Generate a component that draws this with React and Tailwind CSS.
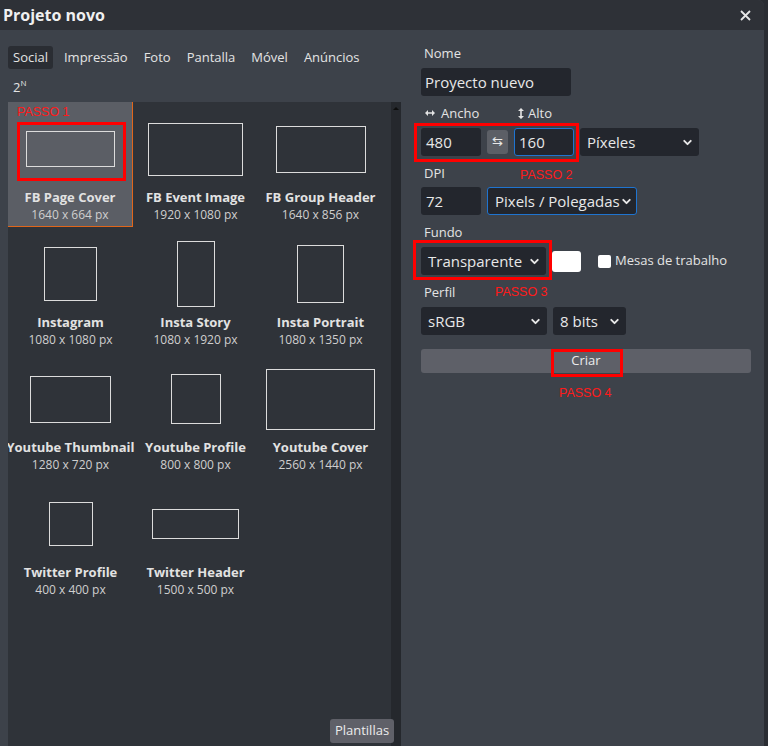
import { ChevronDown } from 'lucide-react';

const tabs = ['Social', 'Impressão', 'Foto', 'Pantalla', 'Móvel', 'Anúncios'];

const presets = [
  { name: 'FB Page Cover', dims: '1640 x 664 px', w: 89, h: 36, selected: true },
  { name: 'FB Event Image', dims: '1920 x 1080 px', w: 95, h: 53 },
  { name: 'FB Group Header', dims: '1640 x 856 px', w: 90, h: 47 },
  { name: 'Instagram', dims: '1080 x 1080 px', w: 53, h: 54 },
  { name: 'Insta Story', dims: '1080 x 1920 px', w: 38, h: 66 },
  { name: 'Insta Portrait', dims: '1080 x 1350 px', w: 47, h: 58 },
  { name: 'Youtube Thumbnail', dims: '1280 x 720 px', w: 81, h: 47 },
  { name: 'Youtube Profile', dims: '800 x 800 px', w: 50, h: 50 },
  { name: 'Youtube Cover', dims: '2560 x 1440 px', w: 109, h: 61 },
  { name: 'Twitter Profile', dims: '400 x 400 px', w: 44, h: 44 },
  { name: 'Twitter Header', dims: '1500 x 500 px', w: 87, h: 30 },
];

function Label({ children }) {
  return <div className="ml-[3px] h-[18px] leading-[18px] text-[13px] text-[#e4e4e4]">{children}</div>;
}

function Select({ value, className = '' }) {
  return (
    <div className={`h-[28px] flex items-center justify-between rounded-[3px] bg-[#23262d] pl-[7px] pr-[5px] text-[15px] text-[#e8e8e8] ${className}`}>
      <span className="whitespace-nowrap">{value}</span>
      <ChevronDown size={13} strokeWidth={3.5} className="text-[#e8e8e8] shrink-0" />
    </div>
  );
}

function Annotation({ className }) {
  return <div className={`absolute border-[3px] border-[#ff0000] pointer-events-none ${className}`} />;
}

function Step({ children, className }) {
  return (
    <div className={`absolute text-[12.5px] leading-[12px] text-[#ff1a1a] font-['Liberation_Sans',sans-serif] ${className}`}>
      {children}
    </div>
  );
}

export default function App() {
  return (
    <div className="relative w-[768px] h-[746px] overflow-hidden bg-[#2a2d33] font-['Open_Sans',sans-serif]">
      <div className="w-[764px] h-full flex flex-col bg-[#3d424a] rounded-tr-[6px] overflow-hidden">
        {/* header */}
        <div className="h-[30px] shrink-0 flex items-center justify-between bg-[#2e3137] pl-[3px] pr-[13px]">
          <span className="text-[16px] font-bold text-[#f0f0f0]">Projeto novo</span>
          <svg width="11" height="11" viewBox="0 0 11 11" className="text-[#e6e6e6]">
            <path d="M1 1 L10 10 M10 1 L1 10" stroke="currentColor" strokeWidth="1.8" />
          </svg>
        </div>

        <div className="flex flex-1 min-h-0">
          {/* left: presets */}
          <div className="w-[401px] shrink-0 flex flex-col pl-[8px] pt-[16px]">
            <div className="flex gap-[6px]">
              {tabs.map((t, i) => (
                <div
                  key={t}
                  className={`h-[23px] leading-[23px] px-[5px] rounded-[3px] text-[13px] text-[#e4e4e4] ${i === 0 ? 'bg-[#2a2d33]' : ''}`}
                >
                  {t}
                </div>
              ))}
            </div>
            <div className="mt-[7px] h-[23px] leading-[23px] px-[5px] text-[13px] text-[#e4e4e4]">
              2<span className="text-[8px] align-top leading-[14px]">N</span>
            </div>

            <div className="mt-[3px] flex flex-1 min-h-0">
              <div className="w-[383px] bg-[#2f3339] overflow-hidden">
                <div className="grid grid-cols-[125px_125px_125px] auto-rows-[125px]">
                  {presets.map((p) => (
                    <div
                      key={p.name}
                      className={`flex flex-col items-center pt-[8px] ${p.selected ? 'bg-[#5b5e65] border-r border-b border-[#e0661b]' : ''}`}
                    >
                      <div className="h-[78px] flex items-center justify-center">
                        <div className="border border-[#dcdcdc]" style={{ width: p.w, height: p.h }} />
                      </div>
                      <div className="leading-[19px] text-[13px] font-bold text-[#e2e2e2] whitespace-nowrap">{p.name}</div>
                      <div className="leading-[16px] text-[12px] text-[#cfcfcf] whitespace-nowrap">{p.dims}</div>
                    </div>
                  ))}
                </div>
              </div>
              <div className="w-[10px] bg-[#25282d] flex justify-center pt-[5px]">
                <div className="w-0 h-0 border-l-[3px] border-r-[3px] border-b-[3px] border-l-transparent border-r-transparent border-b-[#0d0d0d]" />
              </div>
            </div>
          </div>

          {/* right: form */}
          <div className="flex-1 pl-[20px] pr-[12px] pt-[14px] flex flex-col">
            <Label>Nome</Label>
            <div className="mt-[6px] w-[150px] h-[28px] flex items-center rounded-[3px] bg-[#23262d] pl-[4px] text-[15px] text-[#e8e8e8]">
              Proyecto nuevo
            </div>

            <div className="mt-[8px] flex h-[18px] leading-[18px] text-[13px] text-[#e4e4e4]">
              <div className="ml-[4px] w-[93px] flex items-center gap-[6px]">
                <svg width="10" height="6" viewBox="0 0 10 6">
                  <path d="M0 3 L3 0 L3 2.3 L7 2.3 L7 0 L10 3 L7 6 L7 3.7 L3 3.7 L3 6 Z" fill="#e4e4e4" />
                </svg>
                Ancho
              </div>
              <div className="flex items-center gap-[4px]">
                <svg width="6" height="11" viewBox="0 0 6 11">
                  <path d="M3 0 L6 3 L3.8 3 L3.8 8 L6 8 L3 11 L0 8 L2.2 8 L2.2 3 L0 3 Z" fill="#e4e4e4" />
                </svg>
                Alto
              </div>
            </div>
            <div className="mt-[6px] flex items-center gap-[6px]">
              <div className="w-[60px] h-[28px] flex items-center rounded-[3px] bg-[#23262d] pl-[5px] text-[15px] text-[#e8e8e8]">480</div>
              <div className="w-[21px] h-[24px] flex items-center justify-center rounded-[3px] bg-[#5c5f66] text-[13px] text-[#e8e8e8]">⇆</div>
              <div className="w-[60px] h-[28px] flex items-center rounded-[3px] bg-[#23262d] border border-[#1f74d0] pl-[4px] text-[15px] text-[#e8e8e8]">160</div>
              <Select value="Píxeles" className="w-[119px]" />
            </div>

            <div className="mt-[8px]"><Label>DPI</Label></div>
            <div className="mt-[5px] flex items-center gap-[6px]">
              <div className="w-[60px] h-[28px] flex items-center rounded-[3px] bg-[#23262d] pl-[5px] text-[15px] text-[#e8e8e8]">72</div>
              <Select value="Pixels / Polegadas" className="w-[150px] border border-[#1f74d0]" />
            </div>

            <div className="mt-[8px]"><Label>Fundo</Label></div>
            <div className="mt-[6px] flex items-center">
              <Select value="Transparente" className="w-[125px]" />
              <div className="ml-[6px] w-[29px] h-[21px] rounded-[3px] bg-white" />
              <div className="ml-[17px] w-[13px] h-[13px] rounded-[2px] bg-white" />
              <span className="ml-[4px] text-[13px] text-[#e4e4e4]">Mesas de trabalho</span>
            </div>

            <div className="mt-[8px]"><Label>Perfil</Label></div>
            <div className="mt-[6px] flex items-center gap-[6px]">
              <Select value="sRGB" className="w-[126px]" />
              <Select value="8 bits" className="w-[73px]" />
            </div>

            <div className="mt-[14px] w-[330px] h-[24px] flex items-center justify-center rounded-[3px] bg-[#5e6068] text-[13px] text-[#ececec]">
              Criar
            </div>
          </div>
        </div>
      </div>

      <div className="absolute left-[330px] top-[719px] w-[64px] h-[24px] flex items-center justify-center rounded-[3px] bg-[#5f6068] text-[13px] text-[#ececec]">
        Plantillas
      </div>

      {/* tutorial annotations */}
      <Annotation className="left-[17px] top-[122px] w-[109px] h-[59px]" />
      <Step className="left-[17px] top-[106px]">PASSO 1</Step>
      <Annotation className="left-[414px] top-[123px] w-[165px] h-[39px]" />
      <Step className="left-[520px] top-[169px]">PASSO 2</Step>
      <Annotation className="left-[413px] top-[240px] w-[139px] h-[40px]" />
      <Step className="left-[495px] top-[286px]">PASSO 3</Step>
      <Annotation className="left-[551px] top-[349px] w-[72px] h-[28px]" />
      <Step className="left-[559px] top-[387px]">PASSO 4</Step>
    </div>
  );
}
